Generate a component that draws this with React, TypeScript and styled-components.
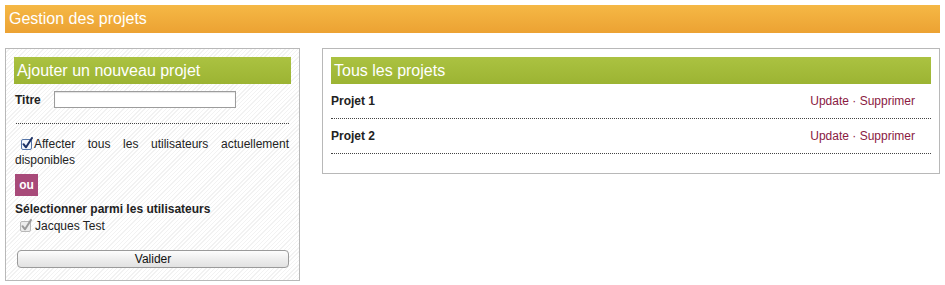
import styled, { createGlobalStyle } from "styled-components";

const GlobalStyle = createGlobalStyle`
    body {
        margin: 0;
        background: #fff;
        font-family: "Liberation Sans", Arial, Helvetica, sans-serif;
        font-size: 12px;
        color: #222;
    }
`;

const Page = styled.div`
    padding: 5px;
`;

const TopBar = styled.h1`
    margin: 0;
    height: 28px;
    line-height: 28px;
    padding-left: 4px;
    font-size: 16px;
    font-weight: normal;
    color: #fff;
    background: linear-gradient(to bottom, #f5b845, #eca233);
`;

const Columns = styled.div`
    display: flex;
    align-items: flex-start;
    gap: 22px;
    margin-top: 15px;
`;

interface PanelProps {
    striped?: boolean,
}
const Panel = styled.section<PanelProps>`
    box-sizing: border-box;
    border: 1px solid #b8b8b8;
    padding: 8px 8px 12px 8px;
    background: ${props => props.striped
        ? 'repeating-linear-gradient(135deg, #fff 0 2px, #f2f2f2 2px 3px)'
        : '#fff'};
`;

const LeftPanel = styled(Panel)`
    width: 295px;
    flex: none;
`;

const RightPanel = styled(Panel)`
    flex: 1;
    padding-bottom: 9px;
`;

const PanelTitle = styled.h2`
    margin: 0;
    height: 27px;
    line-height: 27px;
    padding-left: 3px;
    font-size: 16px;
    font-weight: normal;
    color: #fff;
    background: linear-gradient(to bottom, #abc241, #9cb433);
`;

const FieldRow = styled.div`
    display: flex;
    align-items: center;
    margin-top: 7px;
    padding-left: 1px;
`;

const FieldLabel = styled.label`
    width: 39px;
    font-weight: bold;
`;

const TextInput = styled.input`
    box-sizing: border-box;
    width: 182px;
    height: 17px;
    margin: 0;
    border: 1px solid #9c9c9c;
    box-shadow: inset 0 1px 1px rgba(0, 0, 0, 0.12);
    background: #fff;
`;

const Separator = styled.hr`
    margin: 15px 2px 0 2px;
    border: 0;
    border-top: 1px dotted #444;
    height: 0;
`;

const Justified = styled.p`
    margin: 12px 2px 0 1px;
    line-height: 16px;
    text-align: justify;
`;

interface CheckBoxProps {
    gap: number,
}
const CheckBox = styled.span<CheckBoxProps>`
    display: inline-block;
    width: 12px;
    height: 13px;
    margin: 0 ${props => props.gap}px 0 6px;
    vertical-align: -2px;
`;

const OrBadge = styled.div`
    width: 23px;
    height: 22px;
    margin: 6px 0 0 1px;
    line-height: 22px;
    text-align: center;
    font-weight: bold;
    color: #fff;
    background: #a84a79;
`;

const SubTitle = styled.div`
    margin-top: 5px;
    padding-left: 1px;
    line-height: 16px;
    font-weight: bold;
`;

const UserLine = styled.div`
    margin-top: 1px;
    line-height: 16px;
`;

const SubmitButton = styled.button`
    display: block;
    box-sizing: border-box;
    width: calc(100% - 5px);
    height: 18px;
    margin: 16px 2px 0 3px;
    padding: 0;
    border: 1px solid #9a9a9a;
    border-radius: 4px;
    font-family: inherit;
    font-size: 12px;
    line-height: 16px;
    color: #111;
    background: linear-gradient(to bottom, #fdfdfd, #ebebeb 60%, #e2e2e2);
`;

const ProjectList = styled.ul`
    list-style: none;
    margin: 0 0 10px 0;
    padding: 0;
`;

const ProjectRow = styled.li`
    display: flex;
    justify-content: space-between;
    align-items: center;
    height: 34px;
    border-bottom: 1px dotted #444;
`;

const ProjectName = styled.span`
    font-weight: bold;
`;

const Actions = styled.span`
    padding-right: 16px;
    color: #8a1a42;
`;

const ActionLink = styled.a`
    color: #8a1a42;
    text-decoration: none;
`;

const Check = ({ disabled, gap }: { disabled?: boolean, gap: number }) => (
    <CheckBox gap={gap} role="checkbox" aria-checked="true" aria-disabled={disabled}>
        <svg width="12" height="13" viewBox="0 0 12 13">
            <rect x="0.5" y="2.5" width="10" height="10" rx="1.5"
                fill={disabled ? '#ececec' : '#f4f8fd'}
                stroke={disabled ? '#b8b8b8' : '#5575a8'} />
            <path d="M2.5 7.2 L5 10.3 L11 1"
                fill="none"
                stroke={disabled ? '#9a9a9a' : '#1d3266'}
                strokeWidth="2"
                strokeLinecap="round"
                strokeLinejoin="round" />
        </svg>
    </CheckBox>
);

const projects = ['Projet 1', 'Projet 2'];

const App = () => {
    return (
        <Page>
            <GlobalStyle />
            <TopBar>Gestion des projets</TopBar>
            <Columns>
                <LeftPanel striped>
                    <PanelTitle>Ajouter un nouveau projet</PanelTitle>
                    <FieldRow>
                        <FieldLabel>Titre</FieldLabel>
                        <TextInput type="text" />
                    </FieldRow>
                    <Separator />
                    <Justified>
                        <Check gap={1} />Affecter tous les utilisateurs actuellement disponibles
                    </Justified>
                    <OrBadge>ou</OrBadge>
                    <SubTitle>Sélectionner parmi les utilisateurs</SubTitle>
                    <UserLine>
                        <Check disabled gap={3} />Jacques Test
                    </UserLine>
                    <SubmitButton>Valider</SubmitButton>
                </LeftPanel>
                <RightPanel>
                    <PanelTitle>Tous les projets</PanelTitle>
                    <ProjectList>
                        {projects.map((name) => (
                            <ProjectRow key={name}>
                                <ProjectName>{name}</ProjectName>
                                <Actions>
                                    <ActionLink href="#">Update</ActionLink> · <ActionLink href="#">Supprimer</ActionLink>
                                </Actions>
                            </ProjectRow>
                        ))}
                    </ProjectList>
                </RightPanel>
            </Columns>
        </Page>
    );
}

export default App
